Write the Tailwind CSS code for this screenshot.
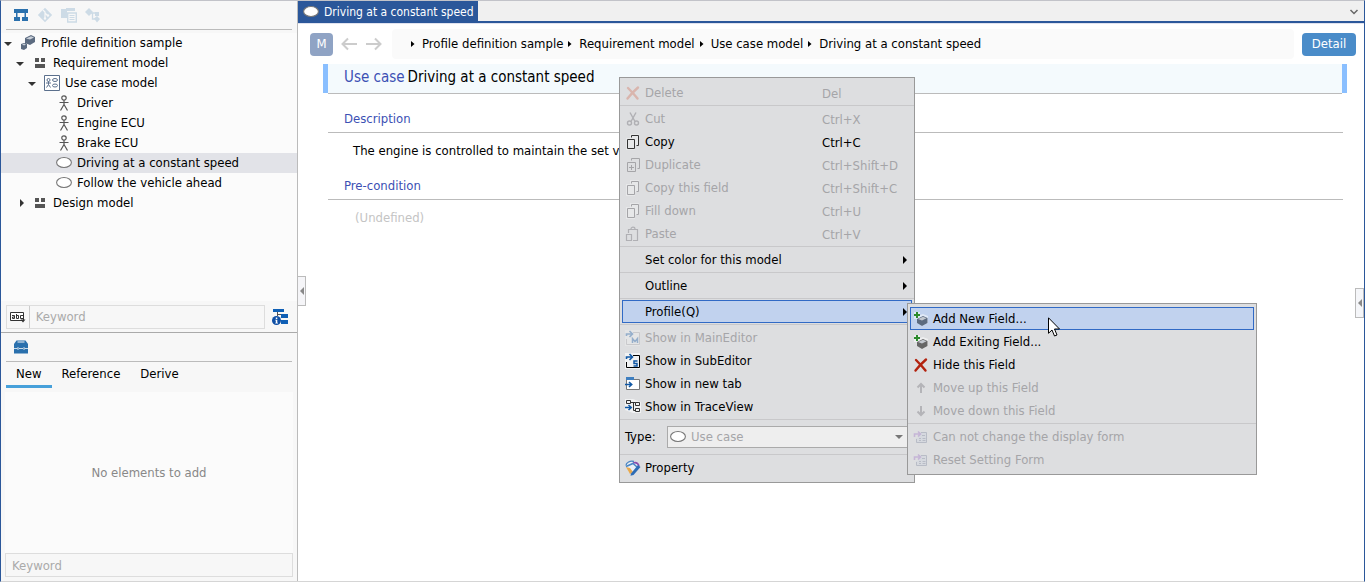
<!DOCTYPE html>
<html lang="en">
  <head>
    <meta charset="UTF-8" />
    <meta name="viewport" content="width=device-width, initial-scale=1.0" />
    <script src="https://cdn.jsdelivr.net/npm/@tailwindcss/browser@4"></script>
    <title>Driving at a constant speed</title>
  </head>
  <body class="font-['DejaVu_Sans_Condensed','Noto_Sans',sans-serif] text-[13px] leading-5 text-black">
    <!-- shared icons -->
    <svg class="hidden">
      <symbol id="i-actor" viewBox="0 0 16 16">
        <g fill="none" stroke="#555" stroke-width="1.2">
          <circle cx="8" cy="3" r="2.2" />
          <path d="M8 5.2V10M3.5 7.5h9M8 9.5L4.5 15.5M8 9.5l3.5 6" />
        </g>
      </symbol>
      <symbol id="i-usecase" viewBox="0 0 16 16">
        <ellipse cx="8" cy="7.5" rx="7.4" ry="5" fill="#fff" stroke="#777" stroke-width="1.1" />
      </symbol>
      <symbol id="i-package" viewBox="0 0 16 16">
        <path fill="#555" d="M3 3h4v4H3zM9 3h4v4H9zM3 9h10v4H3z" />
      </symbol>
      <symbol id="i-copy" viewBox="0 0 16 16">
        <path fill="#fff" fill-opacity=".3" d="M5 0h9v12h-4v4H1V4h4z" />
        <path fill="none" stroke="currentColor" d="M2.500 5.500h7v9h-7zM6.500 3.500v-2h7v10h-2" />
      </symbol>
      <symbol id="i-duplicate" viewBox="0 0 16 16">
        <path fill="none" stroke="currentColor" d="M2.500 5.500h8v9h-8zM6.500 3.500v-2h8v10h-2M4 10.500h5M6.500 8v5" />
      </symbol>
      <symbol id="i-arrow" viewBox="0 0 16 16">
        <path fill="none" stroke="#b4b4b8" stroke-width="2" d="M8 13V4M4.500 7.500L8 4l3.500 3.500" />
      </symbol>
      <symbol id="i-form" viewBox="0 0 16 16">
        <path fill="#d6d9df" d="M5 3h9v11H3V9h2z" />
        <path fill="none" stroke="#b8bcc6" d="M8 3.500h5.500v10h-10V10M9 6.500h3M6 9.500h2M9.500 9.500h3M6 11.500h2M9.500 11.500h3" />
        <path fill="none" stroke="#c5b5d6" stroke-width="1.600" d="M1.500 8V5h5M5 2.500L7.500 5 5 7.500" />
      </symbol>
      <symbol id="i-cube" viewBox="0 0 16 16">
        <path fill="#fff" fill-opacity=".5" d="M1 1h6v3l3-1 5 2v7l-6 3-5-3V8H1z" />
        <path fill="currentColor" d="M4 8l6-3 4.500 2v5L9 15l-5-3z" />
        <path fill="#c3c8cf" d="M5 8l5-2.200 3.500 1.500L9 9.500z" />
        <path fill="none" stroke="#2e8b2e" stroke-width="2" d="M4 1v6M1 4h6" />
      </symbol>
      <symbol id="i-x" viewBox="0 0 16 16">
        <path fill="none" stroke="currentColor" stroke-width="2.400" stroke-linecap="round" d="M3 3c3 3 6 6 9.500 10.500M13 2.500C9 6 6 9 2.500 13.500" />
      </symbol>
      <symbol id="i-editor" viewBox="0 0 16 16">
        <path fill="#fff" fill-opacity=".6" d="M0 0h15v16H0z" />
        <path fill="none" stroke="currentColor" d="M8 2.500h6.500v12h-13V9" />
        <path fill="none" stroke="#1158a5" stroke-width="1.600" d="M1.500 6V4h5M4.500 1L7.500 4 4.500 7" />
      </symbol>
    </svg>

    <div class="flex h-screen border border-t-[#c2c3c9] border-r-[#2b579a] border-b-[#d5d5d5] border-l-[#2b579a] bg-white">
      <aside class="flex w-[297px] shrink-0 flex-col border-r border-[#bbb] bg-[#f7f7f7]">
        <div class="mx-[5px] mb-[3px] flex h-[29px] items-center gap-2 border-b border-[#bbb] px-[7px]">
          <button aria-label="Structure">
            <svg class="size-4" viewBox="0 0 16 16"><path fill="#2a70ad" d="M1 2h14v4H1zM3 6h1.500v4H3zM11.500 6H13v4h-1.500zM1 10h6v4H1zM9 10h6v4H9z" /></svg>
          </button>
          <button aria-label="Git">
            <svg class="size-4" viewBox="0 0 16 16"><path fill="#cddbe6" d="M8 .8L15.200 8 8 15.200.8 8z" /><path fill="none" stroke="#f7f7f7" stroke-width="1.200" d="M6 3l2 2v7M8 6l3 3" /><circle cx="8" cy="11.500" r="1.200" fill="#f7f7f7" /><circle cx="11" cy="8.500" r="1.200" fill="#f7f7f7" /></svg>
          </button>
          <button aria-label="Documents">
            <svg class="size-4" viewBox="0 0 16 16"><path fill="#cddbe6" d="M0 2h5V1h9v3H6v7H0z" /><path fill="#f7f7f7" stroke="#cddbe6" stroke-width="1.400" d="M6.700 6h8.600v9H6.700z" /><path stroke="#cddbe6" d="M8.500 8.500h5M8.500 10.500h5M8.500 12.500h5" /></svg>
          </button>
          <button aria-label="Trace">
            <svg class="size-4" viewBox="0 0 16 16"><path fill="#cddbe6" d="M0 5l4-4 4 4-4 4zM10 5h4v4h-4zM9 11.500l3-2.500 3 3-3 3.500z" /><path fill="none" stroke="#cddbe6" stroke-width="1.300" d="M6 6h4M7.500 6v6H11" /></svg>
          </button>
        </div>

        <ul class="min-h-0 flex-1 bg-[#fbfbfb] [&>li]:flex [&>li]:h-5 [&>li]:items-center [&>li]:gap-[5px]">
          <li class="pl-[3px]">
            <svg class="h-2 w-2" viewBox="0 0 8 8"><path fill="#333" d="M0 3h8L4 7z" /></svg>
            <svg class="ml-[3px] size-4" viewBox="0 0 16 16"><path fill="#5c6b80" d="M5 3l6-3 4 2v5l-5 3-5-2zM1 9l3-1 3 1v4l-3 2-3-1z" /><path fill="#c9d0d9" d="M6 3.500L11 1.200l3 1.300-4 2zM2 9.300L4 8.700l2 .8-2 1z" /><path stroke="#5c6b80" d="M5 9l3-3" /></svg>
            <span>Profile definition sample</span>
          </li>
          <li class="pl-[15px]">
            <svg class="h-2 w-2" viewBox="0 0 8 8"><path fill="#333" d="M0 3h8L4 7z" /></svg>
            <svg class="ml-[3px] size-4"><use href="#i-package" /></svg>
            <span>Requirement model</span>
          </li>
          <li class="pl-[27px]">
            <svg class="h-2 w-2" viewBox="0 0 8 8"><path fill="#333" d="M0 3h8L4 7z" /></svg>
            <svg class="ml-[3px] size-4" viewBox="0 0 16 16"><path fill="#fff" stroke="#5a6f8c" d="M.5.5h15v15H.5z" /><g fill="none" stroke="#5a6f8c"><circle cx="4.500" cy="5" r="1.500" /><path d="M4.500 6.500v3M2 8h5M4.500 9.500l-2 3M4.500 9.500l2 3" /><ellipse cx="11" cy="5" rx="2.500" ry="1.500" /><ellipse cx="11" cy="10.500" rx="2.500" ry="1.500" /></g></svg>
            <span>Use case model</span>
          </li>
          <li class="pl-[55px]"><svg class="size-4"><use href="#i-actor" /></svg><span>Driver</span></li>
          <li class="pl-[55px]"><svg class="size-4"><use href="#i-actor" /></svg><span>Engine ECU</span></li>
          <li class="pl-[55px]"><svg class="size-4"><use href="#i-actor" /></svg><span>Brake ECU</span></li>
          <li class="bg-[#e2e3e8] pl-[55px]"><svg class="size-4"><use href="#i-usecase" /></svg><span>Driving at a constant speed</span></li>
          <li class="pl-[55px]"><svg class="size-4"><use href="#i-usecase" /></svg><span>Follow the vehicle ahead</span></li>
          <li class="pl-[15px]">
            <svg class="h-2 w-2" viewBox="0 0 8 8"><path fill="#333" d="M4 0v8l4-4z" /></svg>
            <svg class="ml-[3px] size-4"><use href="#i-package" /></svg>
            <span>Design model</span>
          </li>
        </ul>

        <div class="flex h-8 items-center border-b border-[#aaa] pr-[9px] pl-[5px]">
          <div class="flex h-6 flex-1 items-center border border-[#ddd]">
            <button class="flex h-full w-[25px] items-center justify-center border-r border-[#ccc]" aria-label="Match mode">
              <svg class="h-3 w-4" viewBox="0 0 16 12"><path fill="#fff" stroke="#333" d="M.5 1.500h13v8H.5z" /><g fill="none" stroke="#333"><path d="M2 4.500h2.500v3H2.500v-1.500h2M6.500 3v4.500H8.500v-3h-2M13 4.500h-2.500v3H13" /></g><path fill="#333" d="M10.500 8.500h5L13 11.500z" /></svg>
            </button>
            <input type="text" placeholder="Keyword" aria-label="Search model" class="w-full min-w-0 px-1.5 outline-none placeholder:text-[#aaa]" />
          </div>
          <button class="ml-[7px]" aria-label="Filter">
            <svg class="size-4" viewBox="0 0 16 16"><path fill="#0f5fb5" d="M1 0h11v3H1zM9 5h7v4H9zM9 11h7v4H9z" /><path fill="none" stroke="#555" d="M5.500 3v4M5.500 5.500H9" /><circle cx="4.500" cy="11.500" r="4.500" fill="#0f4fa5" /><path fill="#fff" d="M3.800 8.500h1.500V10H3.800zM3.300 10.700h2v3h.7v.8H3.300v-.8h.5v-2.200h-.5z" /></svg>
          </button>
        </div>

        <div class="mx-[5px] flex h-[29px] items-center border-b border-[#bbb] px-[7px]">
          <button aria-label="Toolbox">
            <svg class="size-4" viewBox="0 0 16 16"><path fill="#2a70ad" d="M3.500 1.500h9L15 5v9.500H1V5z" /><path fill="#f7f7f7" d="M4.500 2.500h7v1h-7z" /><path fill="none" stroke="#f7f7f7" stroke-width=".8" d="M1 9.500h3.500M6 9.500h4M11.500 9.500H15M5 8v3M11 8v3" /></svg>
          </button>
        </div>
        <nav class="mx-[5px] mb-1 flex h-[26px] [&>button]:px-2.5">
          <button class="border-b-[3px] border-[#46a0da] pt-px">New</button>
          <button class="pb-0.5">Reference</button>
          <button class="pb-0.5">Derive</button>
        </nav>
        <div class="mx-1 flex h-[161px] items-center justify-center bg-[#fbfbfb] text-[#888]">No elements to add</div>
        <input type="text" placeholder="Keyword" aria-label="Search elements" class="mr-1 mb-1 ml-1 h-6 border border-[#ddd] px-1.5 outline-none placeholder:text-[#aaa]" />
      </aside>

      <main class="relative min-w-0 flex-1">
        <header class="flex h-[22px] items-stretch justify-between border-b-2 border-[#2b579a] bg-[#f0f0f0]">
          <button class="flex items-center gap-[5px] bg-[#2b579a] pt-0.5 pr-1 pl-[5px] text-xs text-white">
            <svg class="size-4"><use href="#i-usecase" /></svg>
            Driving at a constant speed
          </button>
          <button class="px-[5px]" aria-label="Open tabs">
            <svg class="h-2 w-2.5" viewBox="0 0 10 8"><path fill="none" stroke="#666" stroke-width="1.500" d="M1.500 3L5 6.500 8.500 3" /></svg>
          </button>
        </header>

        <div class="flex items-center border-t border-[#dfe2ef] pt-[5px] pr-2 pl-3">
          <button class="size-[23px] rounded-sm bg-[#8fa3c4] text-white">M</button>
          <button class="ml-2" aria-label="Back">
            <svg class="size-4" viewBox="0 0 16 16"><path fill="none" stroke="#ccc" stroke-width="2" d="M16 8H1.500M7 2.500L1.500 8 7 13.500" /></svg>
          </button>
          <button class="ml-[9px]" aria-label="Forward">
            <svg class="size-4" viewBox="0 0 16 16"><path fill="none" stroke="#ccc" stroke-width="2" d="M0 8h14.500M9 2.500L14.500 8 9 13.500" /></svg>
          </button>
          <nav class="ml-2.5 flex h-[30px] flex-1 items-center rounded bg-[#fafafa] pl-[19px] [&>a]:mr-[5px] [&>svg]:mr-[7px] [&>svg]:h-2 [&>svg]:w-1">
            <svg viewBox="0 0 4 8"><path d="M0 1l3.500 3L0 7z" /></svg>
            <a href="#">Profile definition sample</a>
            <svg viewBox="0 0 4 8"><path d="M0 1l3.500 3L0 7z" /></svg>
            <a href="#">Requirement model</a>
            <svg viewBox="0 0 4 8"><path d="M0 1l3.500 3L0 7z" /></svg>
            <a href="#">Use case model</a>
            <svg viewBox="0 0 4 8"><path d="M0 1l3.500 3L0 7z" /></svg>
            <a href="#">Driving at a constant speed</a>
          </nav>
          <button class="ml-2 h-[23px] w-[54px] rounded-sm bg-[#4a8cc9] text-white">Detail</button>
        </div>

        <div class="mt-[5px] mr-[17px] ml-[25px] flex h-[30px]">
          <div class="mb-px w-[5px] bg-[#8abfff]"></div>
          <h1 class="flex flex-1 items-center gap-[3px] border-b border-[#bbb] bg-[#f4fafd] pb-[3px] pl-4 text-[15px]">
            <span class="text-[#3c50b4]">Use case</span>
            <span>Driving at a constant speed</span>
          </h1>
          <div class="mb-px w-[5px] bg-[#8abfff]"></div>
        </div>

        <div class="mr-[21px] ml-[30px]">
          <h2 class="mt-[15px] border-b border-[#bbb] pb-[3px] pl-4 text-[#3c50b4]">Description</h2>
          <p class="mt-2 pl-[25px]">The engine is controlled to maintain the set v</p>
          <h2 class="mt-[15px] border-b border-[#bbb] pb-[3px] pl-4 text-[#3c50b4]">Pre-condition</h2>
          <p class="mt-2 pl-[27px] text-[#c4c4c4]">(Undefined)</p>
        </div>

        <!-- pane handles -->
        <button class="absolute top-[275px] left-0 flex h-[30px] w-2 items-center justify-center border border-l-0 border-[#bbb] bg-[#f5f5f8]" aria-label="Collapse left pane">
          <svg class="h-2 w-1" viewBox="0 0 4 8"><path fill="#888" d="M4 0v8L0 4z" /></svg>
        </button>
        <button class="absolute top-[287px] right-0 flex h-[30px] w-[9px] items-center justify-center border border-[#bbb] bg-[#f5f6f9]" aria-label="Expand right pane">
          <svg class="h-2 w-1" viewBox="0 0 4 8"><path fill="#888" d="M4 0v8L0 4z" /></svg>
        </button>

        <!-- context menu -->
        <div class="absolute top-[76px] left-[321px] w-[296px] border border-[#999] bg-[#dddee0] py-[3px] [&_hr]:my-px [&_hr]:border-[#c8c8ca] [&>button]:flex [&>button]:h-[23px] [&>button]:w-full [&>button]:items-center [&>button]:pl-[5px] [&>button]:text-left [&>button>svg]:mr-1 [&>button>kbd]:w-[92px] [&>button>kbd]:pt-0.5 [&>button>kbd]:font-['DejaVu_Sans_Condensed','Noto_Sans',sans-serif] [&>button>span]:flex-1 [&>button:disabled]:text-[#a5a5a8]">
          <button disabled><svg class="size-4 text-[#d9b5ad]"><use href="#i-x" /></svg><span>Delete</span><kbd>Del</kbd></button>
          <hr />
          <button disabled>
            <svg class="size-4" viewBox="0 0 16 16"><g fill="none" stroke="#b0b0b4" stroke-width="1.400"><path d="M5 1.500l5 9M11 1.500l-5 9" /><circle cx="4.500" cy="12" r="2" /><circle cx="11.500" cy="12" r="2" /></g></svg>
            <span>Cut</span><kbd>Ctrl+X</kbd>
          </button>
          <button><svg class="size-4 text-[#333]"><use href="#i-copy" /></svg><span>Copy</span><kbd>Ctrl+C</kbd></button>
          <button disabled><svg class="size-4"><use href="#i-duplicate" /></svg><span>Duplicate</span><kbd>Ctrl+Shift+D</kbd></button>
          <button disabled><svg class="size-4"><use href="#i-copy" /></svg><span>Copy this field</span><kbd>Ctrl+Shift+C</kbd></button>
          <button disabled><svg class="size-4"><use href="#i-copy" /></svg><span>Fill down</span><kbd>Ctrl+U</kbd></button>
          <button disabled>
            <svg class="size-4" viewBox="0 0 16 16"><path fill="none" stroke="#b0b0b4" stroke-width="1.200" d="M1.500 8.500h5v6h-5zM3.500 7V3.500h9v11H8M6 3c0-2.500 4-2.500 4 0" /></svg>
            <span>Paste</span><kbd>Ctrl+V</kbd>
          </button>
          <hr />
          <button class="pr-[3px]"><svg class="size-4"></svg><span>Set color for this model</span><svg class="h-2 w-1" viewBox="0 0 4 8"><path d="M0 0v8l4-4z" /></svg></button>
          <hr />
          <button class="pr-[3px]"><svg class="size-4"></svg><span>Outline</span><svg class="h-2 w-1" viewBox="0 0 4 8"><path d="M0 0v8l4-4z" /></svg></button>
          <hr />
          <div class="relative mx-0.5">
            <button class="flex h-[23px] w-full items-center border border-[#316ac5] bg-[#c1d2ee] pr-1 pl-[22px] text-left">
              <span class="flex-1">Profile(Q)</span>
              <svg class="h-2 w-1" viewBox="0 0 4 8"><path d="M0 0v8l4-4z" /></svg>
            </button>

            <!-- profile submenu -->
            <div class="absolute top-[3px] left-[285px] z-10 w-[350px] border border-[#999] bg-[#dddee0] py-[3px] [&>button]:flex [&>button]:h-[23px] [&>button]:w-full [&>button]:items-center [&>button]:gap-1 [&>button]:pl-[5px] [&>button:disabled]:text-[#a5a5a8]">
              <div class="mx-0.5">
                <button class="flex h-[23px] w-full items-center gap-1 border border-[#316ac5] bg-[#c1d2ee] pl-0.5"><svg class="size-4 text-[#5c6b80]"><use href="#i-cube" /></svg>Add New Field...</button>
              </div>
              <button><svg class="size-4 text-[#666]"><use href="#i-cube" /></svg>Add Exiting Field...</button>
              <button><svg class="size-4 text-[#b3230f]"><use href="#i-x" /></svg>Hide this Field</button>
              <button disabled><svg class="size-4"><use href="#i-arrow" /></svg>Move up this Field</button>
              <button disabled><svg class="size-4 rotate-180"><use href="#i-arrow" /></svg>Move down this Field</button>
              <hr />
              <button disabled><svg class="size-4"><use href="#i-form" /></svg>Can not change the display form</button>
              <button disabled><svg class="size-4"><use href="#i-form" /></svg>Reset Setting Form</button>
              <!-- pointer -->
              <svg class="absolute top-[13px] left-[140px] h-5 w-3" viewBox="0 0 12 20"><path fill="#fff" stroke="#000" d="M.5.8v15.500l3.500-3.300 2.500 6 2.500-1-2.500-6h5z" /></svg>
            </div>
          </div>
          <hr />
          <button disabled>
            <svg class="size-4" viewBox="0 0 16 16"><g opacity=".35"><use href="#i-editor" /><path fill="none" stroke="#1158a5" stroke-width="1.500" d="M7.500 13V8.500L10 11.500l2.500-3V13" /></g></svg>
            <span>Show in MainEditor</span>
          </button>
          <button>
            <svg class="size-4" viewBox="0 0 16 16"><use href="#i-editor" /><path fill="none" stroke="#1158a5" stroke-width="1.500" d="M12.500 8H9v2.500h3V13H8.500" /></svg>
            <span>Show in SubEditor</span>
          </button>
          <button>
            <svg class="size-4" viewBox="0 0 16 16"><path fill="#fff" stroke="#777" d="M1.500 3.500h13v10h-13z" /><path fill="#3f7fc0" d="M1 1h8v3H1z" /><path fill="none" stroke="#1158a5" stroke-width="1.600" d="M0 8.500h6.500M4 6l2.700 2.500L4 11" /></svg>
            <span>Show in new tab</span>
          </button>
          <button>
            <svg class="size-4" viewBox="0 0 16 16"><path fill="#fff" fill-opacity=".6" d="M0 0h8l8 3v11H8L0 11z" /><path fill="none" stroke="#333" d="M1.500 1.500h4v3h-4zM10.500 3.500h4v3h-4zM10.500 9.500h4v3h-4zM5.500 3.500h5M8.500 3.500v8h2" /><path fill="none" stroke="#1158a5" stroke-width="1.600" d="M0 8.500h6M3.500 6l2.700 2.500L3.500 11" /></svg>
            <span>Show in TraceView</span>
          </button>
          <hr />
          <div class="flex h-8 items-center pl-[5px]">
            <label for="type" class="w-[42px]">Type:</label>
            <div class="relative flex-1">
              <select id="type" disabled class="h-[22px] w-full appearance-none border border-[#aaa] bg-[#eee] pl-[23px] text-[#a5a5a8]">
                <option>Use case</option>
              </select>
              <svg class="absolute top-[3px] left-[3px] size-4"><use href="#i-usecase" /></svg>
              <svg class="absolute top-[9px] right-[11px] h-1 w-2" viewBox="0 0 8 4"><path fill="#777" d="M0 0h8L4 4z" /></svg>
            </div>
          </div>
          <hr />
          <button>
            <svg class="size-4" viewBox="0 0 16 16"><path fill="#e8f0f8" d="M1 5l6-4 6 2 2 4-7 7-4-2z" /><path fill="none" stroke="#4a86c5" stroke-width="1.300" d="M1 5.500c0-3 4-5 8-4" /><path fill="none" stroke="#8b4fae" stroke-width="1.600" d="M8 3c3-1 5 0 6 3" /><path fill="#e9a94c" d="M1 7l4 1 3 4-3 2z" /><path fill="none" stroke="#4a86c5" stroke-width="1.500" d="M1 6.500l7-3 4 3.500" /><path fill="#2e6cb5" d="M6 13.500L13 5l2.500 2L8.500 15l-3 .8z" /></svg>
            <span>Property</span>
          </button>
        </div>
      </main>
    </div>
  </body>
</html>
